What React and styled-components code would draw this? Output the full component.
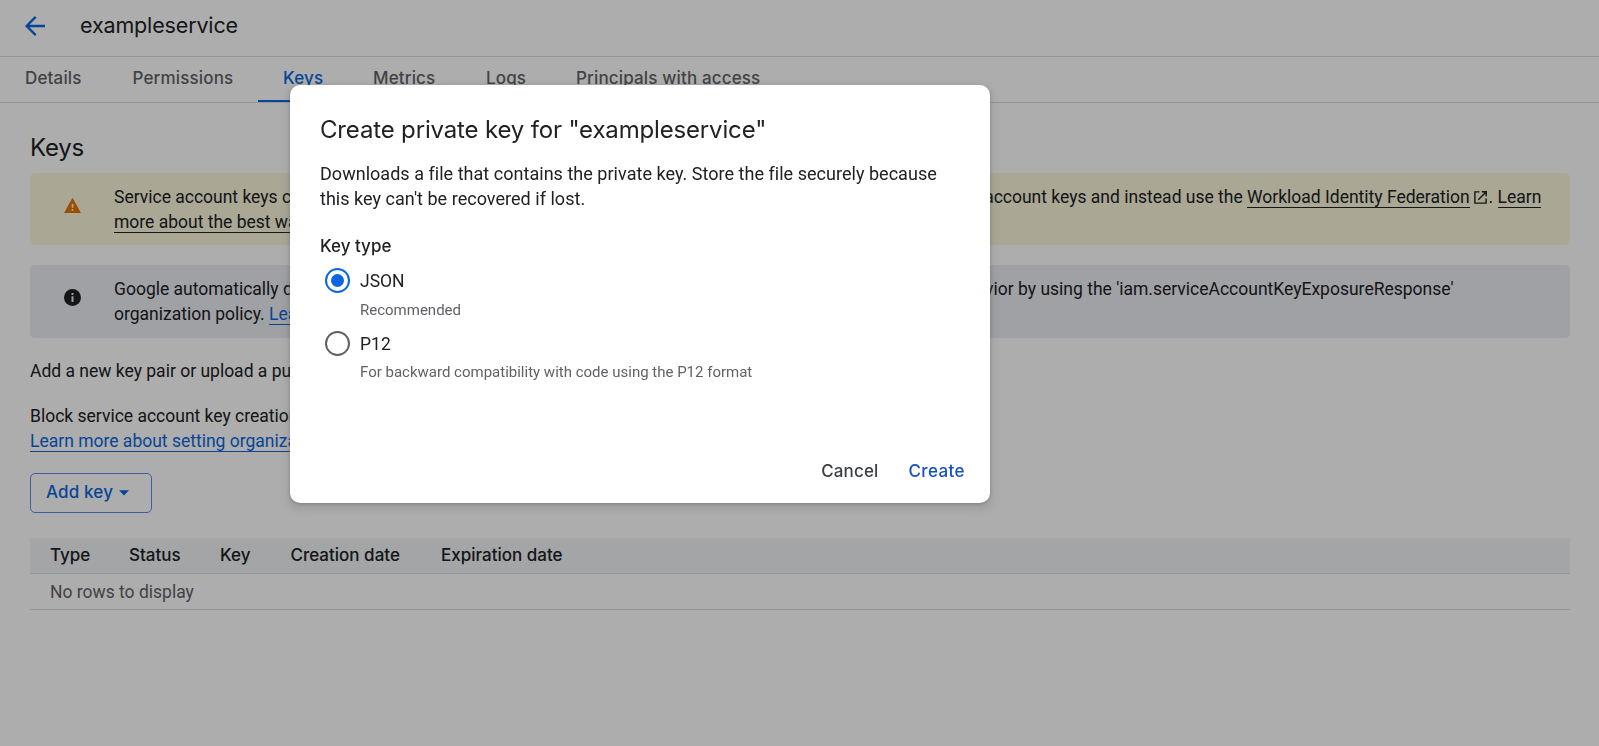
import React from "react";
import styled, { createGlobalStyle } from "styled-components";

const brand = `"Google Sans", Inter, Roboto, sans-serif`;
const blue = "#0b66e0";

const GlobalStyle = createGlobalStyle`
  * { box-sizing: border-box; }
  body {
    margin: 0;
    background: #fff;
    color: #202124;
    font: 400 17.5px/25px Roboto, "Liberation Sans", sans-serif;
    overflow: hidden;
  }
  h1, h2, p { margin: 0; font-weight: 400; }
  button { font: inherit; background: none; border: 0; padding: 0; }
`;

const Page = styled.div`
  height: 746px;
`;

const Header = styled.header`
  display: flex;
  align-items: center;
  height: 57px;
  padding: 0 0 5px 25px;
  border-bottom: 1px solid #dadce0;
  svg { display: block; width: 20px; height: 20px; margin-right: 35px; }
`;

const PageTitle = styled.h1`
  padding-bottom: 2px;
  font: 400 21.5px/30px ${brand};
  letter-spacing: -0.15px;
`;

const Tabs = styled.nav`
  display: flex;
  height: 46px;
  border-bottom: 1px solid #dadce0;
`;

const Tab = styled.a`
  height: 45px;
  width: ${(p) => p.$width}px;
  padding: 9px 0 0 25px;
  font: 500 17px/25px ${brand};
  letter-spacing: 0.15px;
  white-space: nowrap;
  color: ${(p) => (p.$active ? blue : "#5f6368")};
  border-bottom: 2px solid ${(p) => (p.$active ? blue : "transparent")};
`;

const Content = styled.main`
  padding: 30px 29px 0 30px;
`;

const SectionTitle = styled.h2`
  font: 400 24px/30px ${brand};
  letter-spacing: -0.2px;
  margin-bottom: 10px;
`;

const Notice = styled.section`
  display: flex;
  height: ${(p) => p.$height}px;
  margin-bottom: 20px;
  padding: 12px 22px 0 34px;
  border-radius: 5px;
  background: ${(p) => (p.$warning ? "#fbf6dc" : "#ebedf2")};
  word-spacing: ${(p) => (p.$warning ? -0.03 : 0)}px;
  > svg { flex: none; width: 17px; height: 17px; margin: 12px 33px 0 0; }
`;

const Link = styled.a`
  color: ${(p) => (p.$plain ? "inherit" : blue)};
  border-bottom: 1px solid currentColor;
`;

const Paragraph = styled.p`
  padding-top: 1px;
  margin-bottom: 19px;
`;

const AddKey = styled.button`
  display: flex;
  align-items: center;
  width: 122px;
  height: 40px;
  margin-bottom: 25px;
  padding: 0 0 2px 15px;
  border: 1px solid #5791e8;
  border-radius: 5px;
  color: ${blue};
  font: 500 17px/25px ${brand};
  letter-spacing: 0.15px;
  svg { margin: 2px 0 0 6px; }
`;

const Table = styled.div`
  border-bottom: 1px solid #dadce0;
`;

const TableHead = styled.div`
  display: flex;
  height: 36px;
  padding: 5px 20px;
  background: #f0f3f6;
  border-bottom: 1px solid #dadce0;
  font: 500 17px/25px ${brand};
  color: #202124;
`;

const HeadCell = styled.span`
  width: ${(p) => p.$width}px;
  white-space: nowrap;
`;

const EmptyRow = styled.div`
  height: 35px;
  padding: 6px 20px;
  color: #5f6368;
`;

const Backdrop = styled.div`
  position: fixed;
  inset: 0;
  display: flex;
  align-items: flex-start;
  padding: 85px 0 0 290px;
  background: rgba(0, 0, 0, 0.32);
`;

const Dialog = styled.div`
  width: 700px;
  height: 418px;
  display: flex;
  flex-direction: column;
  padding: 29px 25px 19px 30px;
  border-radius: 10px;
  background: #fff;
  box-shadow: 0 1px 3px rgba(60, 64, 67, 0.3), 0 4px 8px 3px rgba(60, 64, 67, 0.15);
`;

const DialogTitle = styled.h2`
  font: 400 24px/32px ${brand};
  letter-spacing: -0.16px;
  margin-bottom: 15px;
`;

const Description = styled.p`
  font-size: 18px;
  letter-spacing: 0.03px;
`;

const GroupLabel = styled.div`
  margin-top: 23px;
  font: 500 17px/25px ${brand};
`;

const Option = styled.label`
  display: flex;
  align-items: center;
  height: 25px;
  margin: ${(p) => p.$top}px 0 0 5px;
`;

const OptionName = styled.span`
  padding-top: 2px;
`;

const Radio = styled.span`
  display: grid;
  place-items: center;
  width: 25px;
  height: 25px;
  margin-right: 10px;
  border-radius: 50%;
  border: 2px solid ${(p) => (p.$checked ? blue : "#5f6368")};
  &::after {
    content: "";
    width: 13px;
    height: 13px;
    border-radius: 50%;
    background: ${(p) => (p.$checked ? blue : "transparent")};
  }
`;

const Hint = styled.div`
  margin: ${(p) => p.$top}px 0 0 40px;
  font-size: 15px;
  line-height: 20px;
  color: #5f6368;
`;

const Actions = styled.div`
  display: flex;
  justify-content: flex-end;
  gap: 30px;
  margin-top: auto;
`;

const Action = styled.button`
  font: 500 17px/25px ${brand};
  letter-spacing: ${(p) => p.$track}px;
  color: ${(p) => (p.$primary ? "#1553b6" : "#3c4043")};
`;

const tabs = [
  ["Details", 107.5],
  ["Permissions", 150.5],
  ["Keys", 90],
  ["Metrics", 113],
  ["Logs", 90],
  ["Principals with access", 240],
];

const columns = [
  ["Type", 79],
  ["Status", 91],
  ["Key", 70.5],
  ["Creation date", 150.5],
  ["Expiration date", 200],
];

const BackIcon = () => (
  <svg viewBox="0 0 20 20" fill="none" stroke={blue} strokeWidth="2.4">
    <path d="M20 10H2M10.7 .9L1.6 10l9.1 9.1" />
  </svg>
);

const WarningIcon = () => (
  <svg viewBox="0 0 17 17">
    <path d="M8.5 .8L17 16H0z" fill="#e37400" />
    <path d="M7.7 7h1.7v3.7H7.7zM7.7 12.1h1.7v1.7H7.7z" fill="#fef7e0" />
  </svg>
);

const InfoIcon = () => (
  <svg viewBox="0 0 17 17">
    <circle cx="8.5" cy="8.5" r="8.5" fill="#202124" />
    <path d="M7.5 3.9h2v2h-2zM7.5 7.3h2v5.8h-2z" fill="#e8eaf0" />
  </svg>
);

const OpenIcon = styled(({ className }) => (
  <svg className={className} viewBox="0 0 13 13" fill="none" stroke="#202124" strokeWidth="1.4">
    <path d="M5.5 .9H.9v11.2h11.2V7.5M7.8 .8h4.4v4.4M12 1L4.3 8.7" />
  </svg>
))`
  width: 13px;
  height: 13px;
  margin: 0 2px 0 4px;
  vertical-align: -1px;
`;

export default function App() {
  return (
    <>
      <GlobalStyle />
      <Page>
        <Header>
          <BackIcon />
          <PageTitle>exampleservice</PageTitle>
        </Header>
        <Tabs>
          {tabs.map(([name, width]) => (
            <Tab key={name} $width={width} $active={name === "Keys"}>{name}</Tab>
          ))}
        </Tabs>
        <Content>
          <SectionTitle>Keys</SectionTitle>
          <Notice $warning $height={72}>
            <WarningIcon />
            <p>
              Service account keys could pose a security risk if compromised. We recommend you avoid
              downloading service account keys and instead use the{" "}
              <Link $plain>Workload Identity Federation</Link>
              <OpenIcon />. <Link $plain>Learn more about the best way to authenticate service accounts on Google Cloud</Link>
              <OpenIcon />.
            </p>
          </Notice>
          <Notice $height={73}>
            <InfoIcon />
            <p>
              Google automatically disables service account keys detected in public repositories. You can
              customize this behavior by using the 'iam.serviceAccountKeyExposureResponse' organization
              policy. <Link>Learn more</Link>
            </p>
          </Notice>
          <Paragraph>Add a new key pair or upload a public key certificate from an existing key pair.</Paragraph>
          <Paragraph>
            Block service account key creation using organization policies.
            <br />
            <Link>Learn more about setting organization policies for service accounts</Link>
          </Paragraph>
          <AddKey>
            Add key
            <svg width="10" height="6" viewBox="0 0 10 6"><path d="M0 .3h10L5 5.5z" fill={blue} /></svg>
          </AddKey>
          <Table>
            <TableHead>
              {columns.map(([name, width]) => (
                <HeadCell key={name} $width={width}>{name}</HeadCell>
              ))}
            </TableHead>
            <EmptyRow>No rows to display</EmptyRow>
          </Table>
        </Content>
      </Page>
      <Backdrop>
        <Dialog role="dialog">
          <DialogTitle>Create private key for "exampleservice"</DialogTitle>
          <Description>
            Downloads a file that contains the private key. Store the file securely because this key can't be
            recovered if lost.
          </Description>
          <GroupLabel>Key type</GroupLabel>
          <Option $top={9}><Radio $checked /><OptionName>JSON</OptionName></Option>
          <Hint $top={7}>Recommended</Hint>
          <Option $top={11}><Radio /><OptionName>P12</OptionName></Option>
          <Hint $top={6}>For backward compatibility with code using the P12 format</Hint>
          <Actions>
            <Action $track={0.15}>Cancel</Action>
            <Action $primary $track={0.4}>Create</Action>
          </Actions>
        </Dialog>
      </Backdrop>
    </>
  );
}
